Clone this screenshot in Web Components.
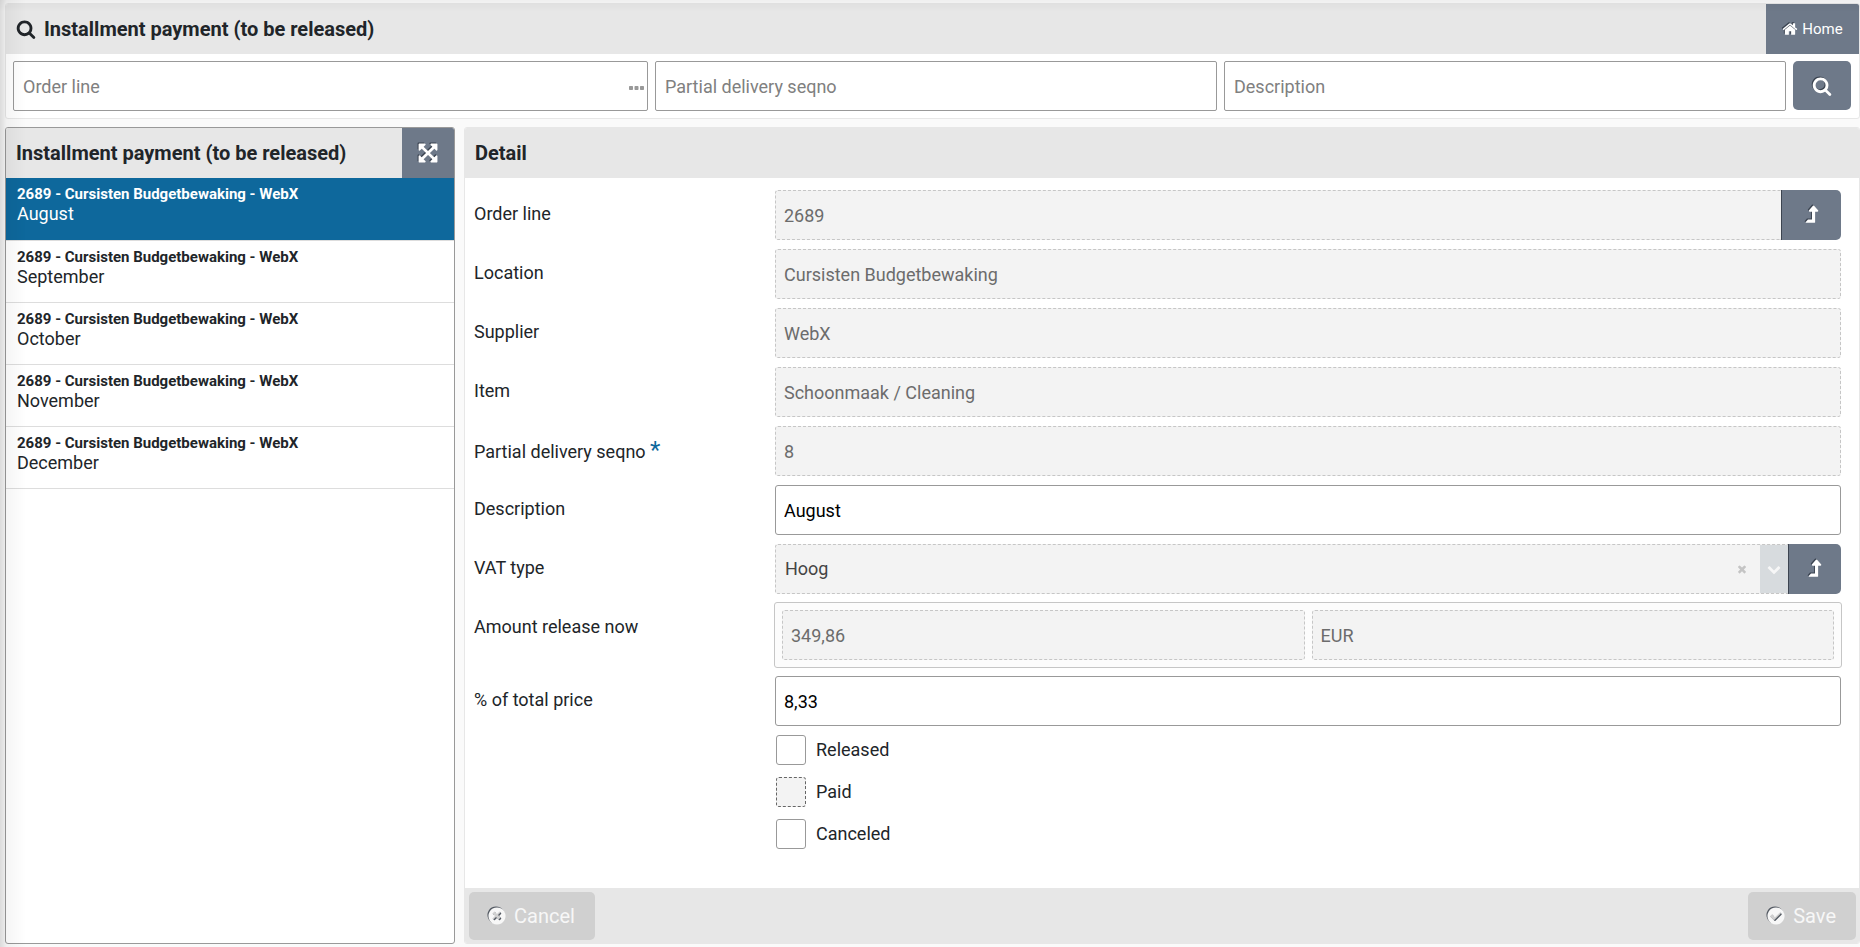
<!DOCTYPE html>
<html lang="en">
<head>
<meta charset="utf-8">
<meta name="viewport" content="width=device-width, initial-scale=1">
<title>Installment payment (to be released)</title>
<style>
    html, body {
        height: 100%;
        margin: 0;
    }
    body {
        font-family: Roboto, "Liberation Sans", sans-serif;
        font-size: 18px;
        line-height: 24px;
        color: #212529;
        background: #fafafa;
        --bar: #e7e7e7;
        --line: #999;
        --slate: #6e7989;
        --blue: #0e689c;
    }
</style>
</head>
<body>
<installment-page></installment-page>

<script>
// Icon outlines, all on a 1792 unit grid
const DISC = 'M1664 896q0 209-103 385.5t-279.5 279.5-385.5 103-385.5-103-279.5-279.5-103-385.5 103-385.5 279.5-279.5 385.5-103 385.5 103 279.5 279.5 103 385.5z';
const ICONS = {
    search: 'M1216 832q0-185-131.5-316.5t-316.5-131.5-316.5 131.5-131.5 316.5 131.5 316.5 316.5 131.5 316.5-131.5 131.5-316.5zm512 832q0 52-38 90t-90 38q-54 0-90-38l-343-342q-179 124-399 124-143 0-273.5-55.5t-225-150-150-225-55.5-273.5 55.5-273.5 150-225 225-150 273.5-55.5 273.5 55.5 225 150 150 225 55.5 273.5q0 220-124 399l343 343q37 37 37 90z',
    home: 'M1472 992v480q0 26-19 45t-45 19h-384v-384h-256v384h-384q-26 0-45-19t-19-45v-480q0-1 .5-3t.5-3l575-474 575 474q1 2 1 6zm223-69l-62 74q-8 9-21 11h-3q-13 0-21-7l-692-577-692 577q-12 8-24 7-13-2-21-11l-62-74q-8-10-7-23.5t11-21.5l719-599q32-26 76-26t76 26l244 204v-195q0-14 9-23t23-9h192q14 0 23 9t9 23v408l219 182q10 8 11 21.5t-7 23.5z',
    expand: 'M1411 541l-355 355 355 355 144-144q29-31 70-14 39 17 39 59v448q0 26-19 45t-45 19h-448q-42 0-59-40-17-39 14-69l144-144-355-355-355 355 144 144q31 30 14 69-17 40-59 40h-448q-26 0-45-19t-19-45v-448q0-42 40-59 39-17 69 14l144 144 355-355-355-355-144 144q-19 19-45 19-12 0-24-5-40-17-40-59v-448q0-26 19-45t45-19h448q42 0 59 40 17 39-14 69l-144 144 355 355 355-355-144-144q-31-30-14-69 17-40 59-40h448q26 0 45 19t19 45v448q0 42-39 59-13 5-25 5-26 0-45-19z',
    jump: 'M1401 587q-17 37-59 37h-192v864q0 14-9 23t-23 9h-704q-21 0-29-18-8-20 4-35l160-192q9-11 25-11h320v-640h-192q-40 0-58-37-17-37 9-68l320-384q18-22 49-22t49 22l320 384q27 32 10 68z',
    cancel: 'M1277 1122q0-26-19-45l-181-181 181-181q19-19 19-45 0-27-19-46l-90-90q-19-19-46-19-26 0-45 19l-181 181-181-181q-19-19-45-19-27 0-46 19l-90 90q-19 19-19 46 0 26 19 45l181 181-181 181q-19 19-19 45 0 27 19 46l90 90q19 19 46 19 26 0 45-19l181-181 181 181q19 19 45 19 27 0 46-19l90-90q19-19 19-46z' + DISC,
    save: 'M1412 734q0-28-18-46l-91-90q-19-19-45-19t-45 19l-408 407-226-226q-19-19-45-19t-45 19l-91 90q-18 18-18 46 0 27 18 45l362 362q19 19 45 19 27 0 46-19l543-543q18-18 18-45z' + DISC,
    clear: 'M1490 1322q0 40-28 68l-136 136q-28 28-68 28t-68-28l-294-294-294 294q-28 28-68 28t-68-28l-136-136q-28-28-28-68t28-68l294-294-294-294q-28-28-28-68t28-68l136-136q28-28 68-28t68 28l294 294 294-294q28-28 68-28t68 28l136 136q28 28 28 68t-28 68l-294 294 294 294q28 28 28 68z',
    down: 'M1683 808l-742 741q-19 19-45 19t-45-19l-742-741q-19-19-19-45.5t19-45.5l166-165q19-19 45-19t45 19l531 531 531-531q19-19 45-19t45 19l166 165q19 19 19 45.5t-19 45.5z',
    dots: 'M96 656h288q96 0 96 96v288q0 96-96 96h-288q-96 0-96-96v-288q0-96 96-96zm656 0h288q96 0 96 96v288q0 96-96 96h-288q-96 0-96-96v-288q0-96 96-96zm656 0h288q96 0 96 96v288q0 96-96 96h-288q-96 0-96-96v-288q0-96 96-96z'
};

class UiIcon extends HTMLElement {
    constructor() {
        super();
        this.attachShadow({ mode: 'open' });
    }

    connectedCallback() {
        this.shadowRoot.innerHTML = `
            <style>
                :host { display: inline-flex; flex: none; width: 20px; height: 20px; }
                svg { width: 100%; height: 100%; overflow: visible; }
                :host([raised]) svg { filter: drop-shadow(-1px -1px 0 rgba(40, 48, 60, 0.75)); }
                path { fill: currentColor; fill-rule: evenodd; }
            </style>
            <svg viewBox="0 0 1792 1792" aria-hidden="true"><path d="${ICONS[this.getAttribute('name')]}"/></svg>
        `;
    }
}

// Square-ish button with an icon; renders a link when it has an href
class IconButton extends HTMLElement {
    constructor() {
        super();
        this.attachShadow({ mode: 'open' });
    }

    connectedCallback() {
        const href = this.getAttribute('href');
        const label = this.getAttribute('label') || '';
        const tag = href ? 'a' : 'button';
        const attrs = href ? `href="${href}"` : `type="button" aria-label="${label}"`;
        this.shadowRoot.innerHTML = `
            <style>
                :host { display: flex; flex: none; }
                a, button {
                    flex: 1;
                    display: flex;
                    align-items: center;
                    justify-content: center;
                    gap: 4px;
                    box-sizing: border-box;
                    margin: 0;
                    padding: 0;
                    border: 0;
                    border-radius: var(--button-radius, 0);
                    font: inherit;
                    font-size: 15px;
                    color: #fff;
                    background: var(--slate);
                    text-decoration: none;
                    cursor: pointer;
                }
                :host([joined]) button {
                    border-left: 1px solid #3c4450;
                    border-radius: 0 5px 5px 0;
                }
            </style>
            <${tag} ${attrs}><slot></slot></${tag}>
        `;
    }
}

class FooterButton extends HTMLElement {
    constructor() {
        super();
        this.attachShadow({ mode: 'open' });
        this.shadowRoot.innerHTML = `
            <style>
                :host { display: flex; }
                button {
                    display: flex;
                    align-items: center;
                    gap: 7px;
                    height: 48px;
                    padding: 0 20px 0 18px;
                    border: 0;
                    border-radius: 5px;
                    font: inherit;
                    font-size: 20px;
                    color: #f7f7f7;
                    background: #d0d0d0;
                }
            </style>
            <button type="button" disabled><ui-icon name="${this.getAttribute('icon')}" raised></ui-icon><slot></slot></button>
        `;
    }
}

class PanelBox extends HTMLElement {
    constructor() {
        super();
        this.attachShadow({ mode: 'open' });
        this.shadowRoot.innerHTML = `
            <style>
                :host {
                    display: flex;
                    flex-direction: column;
                    box-sizing: border-box;
                    min-width: 0;
                    border: 1px solid var(--bar);
                    border-radius: 3px;
                    background: #fff;
                    overflow: hidden;
                }
                :host([outlined]) { border-color: var(--line); }
                header {
                    display: flex;
                    align-items: stretch;
                    justify-content: space-between;
                    height: 50px;
                    background: var(--bar);
                }
                h2 {
                    display: flex;
                    align-items: center;
                    gap: 8px;
                    margin: 0;
                    padding-left: 10px;
                    font-size: 20px;
                    font-weight: 700;
                }
                .body { flex: 1; }
            </style>
            <header><h2><slot name="icon"></slot><slot name="title"></slot></h2><slot name="action"></slot></header>
            <div class="body"><slot></slot></div>
            <slot name="footer"></slot>
        `;
    }
}

class FilterInput extends HTMLElement {
    constructor() {
        super();
        this.attachShadow({ mode: 'open' });
    }

    connectedCallback() {
        const label = this.getAttribute('label');
        this.shadowRoot.innerHTML = `
            <style>
                :host { display: block; position: relative; min-width: 0; }
                input {
                    box-sizing: border-box;
                    width: 100%;
                    height: 50px;
                    padding: 0 9px;
                    border: 1px solid var(--line);
                    border-radius: 2px;
                    font: inherit;
                    background: #fff;
                }
                input::placeholder { color: #808080; opacity: 1; }
                button {
                    position: absolute;
                    right: 4px;
                    top: 18px;
                    display: flex;
                    padding: 0;
                    border: 0;
                    color: var(--line);
                    background: none;
                }
                ui-icon { width: 15px; height: 18px; }
            </style>
            <input type="text" placeholder="${label}" aria-label="${label}">
            ${this.hasAttribute('lookup') ? '<button type="button" aria-label="Look up"><ui-icon name="dots"></ui-icon></button>' : ''}
        `;
    }
}

class InstallmentItem extends HTMLElement {
    constructor() {
        super();
        this.attachShadow({ mode: 'open' });
        this.shadowRoot.innerHTML = `
            <style>
                :host { display: block; border-bottom: 1px solid #ddd; }
                a {
                    display: block;
                    padding: 6px 11px 15px;
                    color: inherit;
                    text-decoration: none;
                }
                b, span { display: block; line-height: 20px; }
                b { font-size: 15px; font-weight: 700; }
                :host([selected]) a { padding-bottom: 16px; color: #fff; background: var(--blue); }
            </style>
            <a href="#"><b><slot name="order"></slot></b><span><slot></slot></span></a>
        `;
    }
}

const FIELD_STYLE = `
    :host {
        display: grid;
        grid-template-columns: 301px minmax(0, 1fr);
        min-height: 50px;
    }
    label { padding-top: 12px; }
    sup { font-size: 24px; line-height: 24px; vertical-align: baseline; color: var(--blue); }
    .control { display: flex; min-width: 0; height: 50px; }
    input, .select {
        flex: 1;
        box-sizing: border-box;
        min-width: 0;
        height: 50px;
        margin: 0;
        padding: 0 8px;
        border: 1px solid var(--line);
        border-radius: 3px;
        font: inherit;
        color: #000;
        background: #fff;
    }
    input:disabled, .select {
        border: 1px dashed #c6c6c6;
        color: #6c6c6c;
        background: #f3f3f3;
    }
    .control.joined input, .control.joined .select {
        border-right: 0;
        border-radius: 3px 0 0 3px;
    }
    icon-button ui-icon { width: 22px; height: 22px; }
`;

class DetailField extends HTMLElement {
    constructor() {
        super();
        this.attachShadow({ mode: 'open' });
    }

    connectedCallback() {
        const jump = this.hasAttribute('jump');
        this.shadowRoot.innerHTML = `
            <style>
                ${FIELD_STYLE}
                icon-button { width: 60px; }
            </style>
            <label for="value">${this.getAttribute('label')}${this.hasAttribute('required') ? ' <sup>*</sup>' : ''}</label>
            <div class="control ${jump ? 'joined' : ''}">
                <input id="value" type="text" value="${this.getAttribute('value')}" ${this.hasAttribute('locked') ? 'disabled' : ''}>
                ${jump ? '<icon-button joined label="Open"><ui-icon name="jump" raised></ui-icon></icon-button>' : ''}
            </div>
        `;
    }
}

class SelectField extends HTMLElement {
    constructor() {
        super();
        this.attachShadow({ mode: 'open' });
    }

    connectedCallback() {
        this.shadowRoot.innerHTML = `
            <style>
                ${FIELD_STYLE}
                .select { display: flex; align-items: stretch; padding: 0; }
                select {
                    flex: 1;
                    min-width: 0;
                    padding: 0 9px;
                    border: 0;
                    appearance: none;
                    font: inherit;
                    color: #444;
                    opacity: 1;
                    background: none;
                }
                .clear { display: flex; align-items: center; padding: 0 12px 0 0; border: 0; color: #c4c4c4; background: none; }
                .clear ui-icon { width: 12px; height: 12px; }
                .caret { display: flex; align-items: center; justify-content: center; width: 28px; color: #f7f7f7; background: #d7dbde; }
                .caret ui-icon { width: 14px; height: 14px; }
                icon-button { width: 53px; }
            </style>
            <label for="value">${this.getAttribute('label')}</label>
            <div class="control joined">
                <div class="select">
                    <select id="value" disabled><option>${this.getAttribute('value')}</option></select>
                    <button class="clear" type="button" aria-label="Clear" disabled><ui-icon name="clear"></ui-icon></button>
                    <span class="caret"><ui-icon name="down"></ui-icon></span>
                </div>
                <icon-button joined label="Open"><ui-icon name="jump" raised></ui-icon></icon-button>
            </div>
        `;
    }
}

class AmountField extends HTMLElement {
    constructor() {
        super();
        this.attachShadow({ mode: 'open' });
    }

    connectedCallback() {
        this.shadowRoot.innerHTML = `
            <style>
                ${FIELD_STYLE}
                .group {
                    display: flex;
                    gap: 7px;
                    margin: -1px;
                    padding: 7px;
                    border: 1px solid #c6c6c6;
                    border-radius: 3px;
                    background: #fcfcfc;
                }
            </style>
            <label for="amount">${this.getAttribute('label')}</label>
            <div class="group">
                <input id="amount" type="text" value="${this.getAttribute('amount')}" disabled>
                <input type="text" aria-label="Currency" value="${this.getAttribute('currency')}" disabled>
            </div>
        `;
    }
}

class CheckField extends HTMLElement {
    constructor() {
        super();
        this.attachShadow({ mode: 'open' });
    }

    connectedCallback() {
        this.shadowRoot.innerHTML = `
            <style>
                :host { display: flex; align-items: center; gap: 10px; }
                input {
                    appearance: none;
                    box-sizing: border-box;
                    width: 30px;
                    height: 30px;
                    margin: 0;
                    border: 1px solid var(--line);
                    border-radius: 3px;
                    background: #fff;
                }
                input:checked { background: var(--blue); }
                input:disabled { border: 1px dashed #666; background: #f3f3f3; }
            </style>
            <input id="box" type="checkbox" ${this.hasAttribute('locked') ? 'disabled' : ''}>
            <label for="box"><slot></slot></label>
        `;
    }
}

class InstallmentPage extends HTMLElement {
    constructor() {
        super();
        this.attachShadow({ mode: 'open' });
        this.shadowRoot.innerHTML = `
            <style>
                :host {
                    display: flex;
                    flex-direction: column;
                    gap: 8px;
                    box-sizing: border-box;
                    min-height: 100%;
                    padding: 3px 0 3px 5px;
                }
                :host::before, :host::after {
                    content: "";
                    position: fixed;
                    left: 0;
                    top: 0;
                    z-index: 1;
                    pointer-events: none;
                }
                :host::before {
                    width: 26px;
                    bottom: 0;
                    background: linear-gradient(to right, rgba(0, 0, 0, 0.12), rgba(0, 0, 0, 0.04) 25%, transparent);
                }
                :host::after {
                    right: 0;
                    height: 12px;
                    background: linear-gradient(rgba(0, 0, 0, 0.04), transparent);
                }
                .filters {
                    display: grid;
                    grid-template-columns: 113fr 100fr 100fr 58px;
                    gap: 7px;
                    padding: 7px 8px 7px 7px;
                }
                .filters icon-button { height: 49px; --button-radius: 5px; }
                .home { width: 93px; }
                .home ui-icon { width: 16px; height: 16px; }
                .expand { width: 52px; }
                .expand ui-icon { width: 22px; height: 22px; }
                .columns {
                    flex: 1;
                    display: grid;
                    grid-template-columns: 450px minmax(0, 1fr);
                    gap: 9px;
                }
                .form {
                    display: flex;
                    flex-direction: column;
                    gap: 9px;
                    padding: 12px 18px 12px 9px;
                }
                .checks {
                    display: flex;
                    flex-direction: column;
                    gap: 12px;
                    margin-left: 302px;
                }
                footer {
                    display: flex;
                    justify-content: space-between;
                    padding: 4px 3px 3px 4px;
                    background: var(--bar);
                }
            </style>
            <panel-box>
                <ui-icon slot="icon" name="search"></ui-icon>
                <span slot="title">Installment payment (to be released)</span>
                <icon-button slot="action" class="home" href="#"><ui-icon name="home" raised></ui-icon>Home</icon-button>
                <form class="filters">
                    <filter-input label="Order line" lookup></filter-input>
                    <filter-input label="Partial delivery seqno"></filter-input>
                    <filter-input label="Description"></filter-input>
                    <icon-button label="Search"><ui-icon name="search" raised></ui-icon></icon-button>
                </form>
            </panel-box>
            <div class="columns">
                <panel-box outlined>
                    <span slot="title">Installment payment (to be released)</span>
                    <icon-button slot="action" class="expand" label="Expand"><ui-icon name="expand" raised></ui-icon></icon-button>
                    <installment-item selected><span slot="order">2689 - Cursisten Budgetbewaking - WebX</span>August</installment-item>
                    <installment-item><span slot="order">2689 - Cursisten Budgetbewaking - WebX</span>September</installment-item>
                    <installment-item><span slot="order">2689 - Cursisten Budgetbewaking - WebX</span>October</installment-item>
                    <installment-item><span slot="order">2689 - Cursisten Budgetbewaking - WebX</span>November</installment-item>
                    <installment-item><span slot="order">2689 - Cursisten Budgetbewaking - WebX</span>December</installment-item>
                </panel-box>
                <panel-box>
                    <span slot="title">Detail</span>
                    <form class="form">
                        <detail-field label="Order line" value="2689" locked jump></detail-field>
                        <detail-field label="Location" value="Cursisten Budgetbewaking" locked></detail-field>
                        <detail-field label="Supplier" value="WebX" locked></detail-field>
                        <detail-field label="Item" value="Schoonmaak / Cleaning" locked></detail-field>
                        <detail-field label="Partial delivery seqno" value="8" locked required></detail-field>
                        <detail-field label="Description" value="August"></detail-field>
                        <select-field label="VAT type" value="Hoog"></select-field>
                        <amount-field label="Amount release now" amount="349,86" currency="EUR"></amount-field>
                        <detail-field label="% of total price" value="8,33"></detail-field>
                        <div class="checks">
                            <check-field>Released</check-field>
                            <check-field locked>Paid</check-field>
                            <check-field>Canceled</check-field>
                        </div>
                    </form>
                    <footer slot="footer">
                        <footer-button icon="cancel">Cancel</footer-button>
                        <footer-button icon="save">Save</footer-button>
                    </footer>
                </panel-box>
            </div>
        `;
    }
}

customElements.define('ui-icon', UiIcon);
customElements.define('icon-button', IconButton);
customElements.define('footer-button', FooterButton);
customElements.define('panel-box', PanelBox);
customElements.define('filter-input', FilterInput);
customElements.define('installment-item', InstallmentItem);
customElements.define('detail-field', DetailField);
customElements.define('select-field', SelectField);
customElements.define('amount-field', AmountField);
customElements.define('check-field', CheckField);
customElements.define('installment-page', InstallmentPage);
</script>
</body>
</html>
